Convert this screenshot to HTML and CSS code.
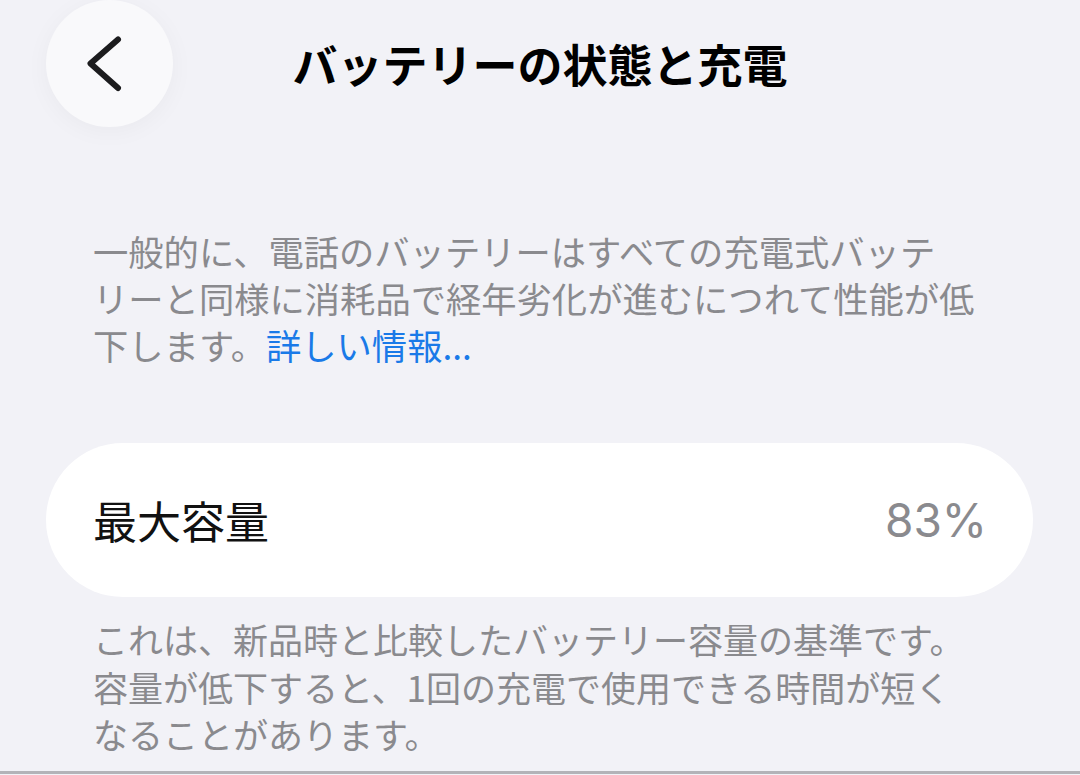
FILE: index.html
```html
<!DOCTYPE html>
<html lang="ja">
  <head>
    <meta charset="utf-8">
    <title>バッテリーの状態と充電</title>
    <link rel="stylesheet" href="styles.css">
  </head>
  <body>
    <header class="nav-bar">
      <button class="back-button" type="button" aria-label="戻る">
        <svg width="127" height="127" viewBox="0 0 127 127">
          <path d="M72 39.5 L44.5 63.5 L72 88" fill="none" stroke="#1c1c1e" stroke-width="6" stroke-linecap="round" stroke-linejoin="round"/>
        </svg>
      </button>
      <h1 class="nav-title">バッテリーの状態と充電</h1>
      <div></div>
    </header>

    <p class="intro">
      一般的に、電話のバッテリーはすべての充電式バッテ<br>リーと同様に消耗品で経年劣化が進むにつれて性能が低<br>下します。<a href="#" class="more-link">詳しい情報...</a>
    </p>

    <div class="group">
      <div class="row">
        <span class="row-label">最大容量</span>
        <span class="row-value">83%</span>
      </div>
    </div>

    <p class="footnote">
      これは、新品時と比較したバッテリー容量の基準です。<br>容量が低下すると、1回の充電で使用できる時間が短く<br>なることがあります。
    </p>

    <div class="bottom-edge"></div>
  </body>
</html>
```

FILE: styles.css
```css
body {
  margin: 0;
  background-color: #f2f2f7;
  font-family: "Noto Sans CJK JP", "Noto Sans", sans-serif;
  color: #000;
}
.nav-bar {
  display: grid;
  grid-template-columns: 127px 1fr 127px;
  align-items: center;
  padding: 0 46px;
  height: 127px;
}
.back-button {
  width: 127px;
  height: 127px;
  padding: 0;
  border: none;
  border-radius: 50%;
  background-color: #f9f9fb;
  box-shadow: 0 4px 24px rgba(0, 0, 0, 0.04);
  display: flex;
  align-items: center;
  justify-content: center;
  cursor: pointer;
}
.back-button svg {
  display: block;
}
.nav-title {
  margin: 0;
  text-align: center;
  font-size: 45px;
  font-weight: 700;
  line-height: 1;
}
.intro {
  margin: 100px 0 0;
  padding: 0 40px 0 93px;
  font-size: 35.3px;
  line-height: 47px;
  color: #8a8a8e;
}
.more-link {
  color: #1a7ae8;
  text-decoration: none;
}
.group {
  margin: 75px 47px 0 46px;
  background-color: #fff;
  border-radius: 77px;
}
.row {
  display: flex;
  align-items: center;
  justify-content: space-between;
  height: 154px;
  padding: 0 46px 0 47px;
}
.row-label {
  font-size: 44px;
  color: #111;
}
.row-value {
  font-family: Inter, Roboto, sans-serif;
  font-size: 46px;
  color: #8a8a8e;
}
.footnote {
  margin: 18px 0 0;
  padding: 0 40px 0 93px;
  font-size: 35px;
  line-height: 47.5px;
  color: #8a8a8e;
}
.bottom-edge {
  margin-top: 13px;
  height: 3px;
  background-color: #b3b3b8;
}
```
